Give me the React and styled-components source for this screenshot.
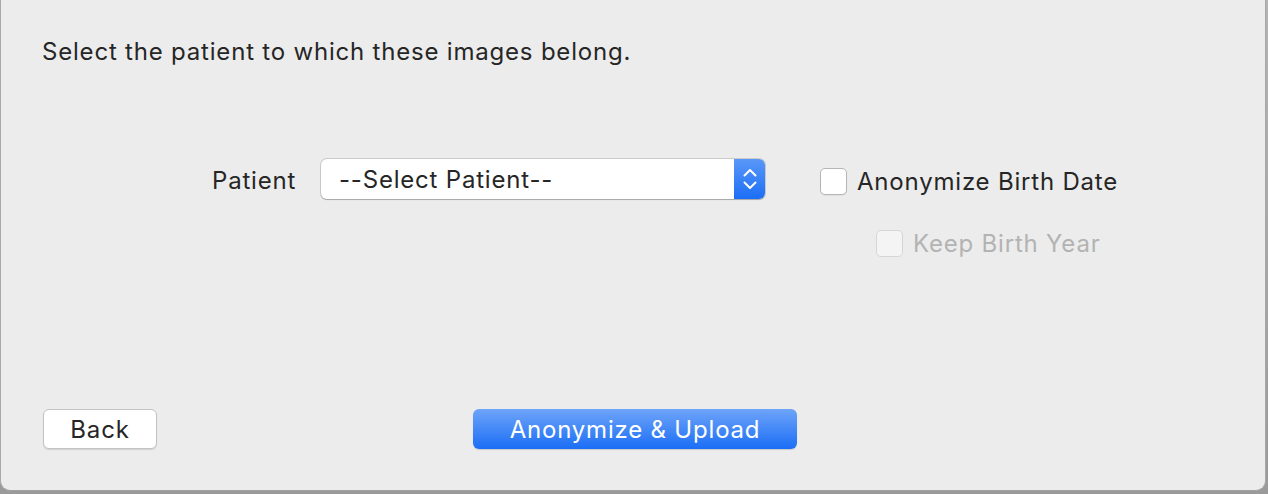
import React, { useState } from 'react';
import styled, { createGlobalStyle } from 'styled-components';

const Global = createGlobalStyle`
  html, body {
    margin: 0;
    padding: 0;
    background: #9e9e9e;
    font-family: Inter, "Liberation Sans", Arial, sans-serif;
  }
`;

const Backdrop = styled.div`
  width: 1268px;
  height: 494px;
  background: linear-gradient(#b4b4b4, #9a9a9a);
  overflow: hidden;
`;

const Window = styled.div`
  width: 1266px;
  height: 491px;
  box-sizing: border-box;
  background: #ececec;
  border-left: 1px solid #a8a8a8;
  border-right: 1px solid #a8a8a8;
  border-bottom: 1px solid #a0a0a0;
  border-radius: 0 0 10px 10px;
  display: flex;
  flex-direction: column;
  padding: 37px 0 41px 41px;
  color: #262626;
  font-size: 24px;
  letter-spacing: 0.8px;
`;

const Title = styled.p`
  margin: 0;
  line-height: 29px;
`;

const Form = styled.div`
  display: flex;
  align-items: flex-start;
  margin-top: 93px;
  padding-left: 170px;
`;

const Label = styled.span`
  line-height: 40px;
  padding-top: 2px;
  width: 109px;
`;

const Select = styled.div`
  width: 444px;
  height: 40px;
  box-sizing: border-box;
  display: flex;
  align-items: center;
  background: #fff;
  border-radius: 6px;
  box-shadow: 0 0 0 1px rgba(0,0,0,0.14), 0 1px 1px rgba(0,0,0,0.18);
  overflow: hidden;
`;

const SelectText = styled.span`
  flex: 1;
  padding-left: 18px;
  padding-top: 1px;
`;

const Stepper = styled.div`
  width: 31px;
  height: 100%;
  display: flex;
  align-items: center;
  justify-content: center;
  background: linear-gradient(#5a98f8, #1c6ef6);
`;

const Options = styled.div`
  display: flex;
  flex-direction: column;
  margin-left: 55px;
  margin-top: 9px;
  gap: 35px;
`;

const Check = styled.label`
  display: flex;
  align-items: center;
  gap: 10px;
  line-height: 27px;
  margin-left: ${p => (p.indent ? '56px' : '0')};
  color: ${p => (p.disabled ? '#b3b3b3' : '#262626')};
`;

const Box = styled.span`
  width: 27px;
  height: 27px;
  box-sizing: border-box;
  border-radius: 5px;
  background: ${p => (p.disabled ? '#f4f4f4' : '#fff')};
  border: 1px solid ${p => (p.disabled ? '#d6d6d6' : '#b5b5b5')};
  box-shadow: ${p => (p.disabled ? 'none' : '0 1px 1px rgba(0,0,0,0.06)')};
`;

const Footer = styled.div`
  margin-top: auto;
  display: grid;
  grid-template-columns: 1fr auto 1fr;
  align-items: center;
  padding-right: 38px;
  padding-left: 1px;
`;

const Button = styled.button`
  height: 40px;
  box-sizing: border-box;
  border-radius: 6px;
  font-family: Inter, "Liberation Sans", Arial, sans-serif;
  font-size: 24px;
  letter-spacing: 0.8px;
  padding: 0;
  width: ${p => p.w}px;
  color: ${p => (p.primary ? '#fff' : '#262626')};
  border: ${p => (p.primary ? 'none' : '1px solid #c4c4c4')};
  background: ${p => (p.primary ? 'linear-gradient(#6ea4f8, #1b6ef6)' : '#fff')};
  box-shadow: ${p => (p.primary ? '0 1px 1px rgba(0,0,0,0.15)' : '0 1px 1px rgba(0,0,0,0.12)')};
`;

const Arrows = () => (
  <svg width="16" height="26" viewBox="0 0 16 26" fill="none" stroke="#fff" strokeWidth="2" strokeLinecap="round" strokeLinejoin="round">
    <path d="M2.5 9.5 L8 4 L13.5 9.5" />
    <path d="M2.5 16.5 L8 22 L13.5 16.5" />
  </svg>
);

export default function App() {
  const [anon, setAnon] = useState(false);
  return (
    <>
      <Global />
      <Backdrop>
        <Window>
          <Title>Select the patient to which these images belong.</Title>
          <Form>
            <Label>Patient</Label>
            <Select>
              <SelectText>--Select Patient--</SelectText>
              <Stepper><Arrows /></Stepper>
            </Select>
            <Options>
              <Check onClick={() => setAnon(!anon)}>
                <Box />
                Anonymize Birth Date
              </Check>
              <Check indent disabled>
                <Box disabled />
                Keep Birth Year
              </Check>
            </Options>
          </Form>
          <Footer>
            <Button w={114}>Back</Button>
            <Button primary w={324}>Anonymize &amp; Upload</Button>
            <span />
          </Footer>
        </Window>
      </Backdrop>
    </>
  );
}
